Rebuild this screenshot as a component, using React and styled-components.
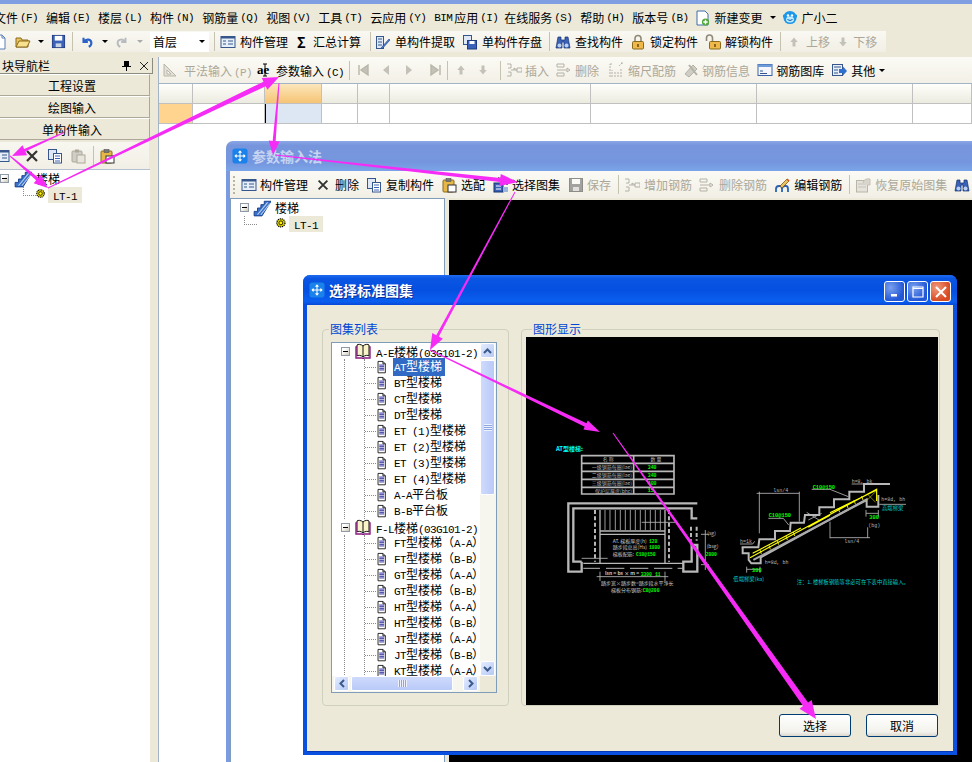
import React from 'react';
import styled, { createGlobalStyle } from 'styled-components';

const GlobalStyle = createGlobalStyle`
  html, body { margin: 0; padding: 0; background: #ece9d8; }
  body { font-family: "Noto Sans CJK SC", "Liberation Sans", sans-serif; font-size: 12px; color: #000; }
`;

const Page = styled.div`
  position: relative;
  width: 972px;
  height: 762px;
  overflow: hidden;
  background: #ece9d8;
  display: flex;
  flex-direction: column;
`;

const L = styled.span`
  font-family: "Liberation Mono", monospace;
  font-size: 11px;
  letter-spacing: -0.6px;
  margin-left: ${p => p.$ml ?? 0}px;
`;

const TopStrip = styled.div`
  height: 4px;
  flex: none;
  background: #7f9fe2;
`;

const MenuBar = styled.div`
  height: 27px;
  flex: none;
  display: flex;
  align-items: center;
  gap: 8px;
  margin-left: -6px;
`;

const MenuItem = styled.span`
  display: flex;
  align-items: center;
  gap: 2px;
  margin-right: ${p => p.$mr ?? 0}px;
  white-space: nowrap;
`;

const Caret = styled.i`
  width: 0;
  height: 0;
  flex: none;
  margin-left: ${p => p.$ml ?? 0}px;
  border-left: 3px solid transparent;
  border-right: 3px solid transparent;
  border-top: 3px solid ${p => (p.$off ? '#aaa' : '#000')};
`;

const MainBar = styled.div`
  width: 886px;
  height: 21px;
  flex: none;
  display: flex;
  align-items: center;
  gap: 7px;
  margin-bottom: 3px;
  background: linear-gradient(#f9f8f2, #f1efe5);
  overflow: hidden;
`;

const Tool = styled.span`
  display: flex;
  align-items: center;
  gap: ${p => p.$gap ?? 4}px;
  flex: none;
  margin-left: ${p => p.$ml ?? 0}px;
  white-space: nowrap;
  color: ${p => (p.$off ? '#aca899' : '#000')};
`;

const Sigma = styled.b`
  width: 9px;
  font-size: 14px;
  line-height: 14px;
`;

const Sep = styled.i`
  width: 1px;
  height: 19px;
  flex: none;
  margin-left: ${p => p.$ml ?? 0}px;
  background: #c5c2b0;
`;

const Combo = styled.div`
  width: 59px;
  height: 20px;
  flex: none;
  display: flex;
  align-items: center;
  justify-content: space-between;
  padding: 0 4px 0 3px;
  box-sizing: border-box;
  background: #fff;
`;

const Work = styled.div`
  flex: 1;
  display: flex;
  min-height: 0;
`;

const Side = styled.aside`
  width: 158px;
  flex: none;
  display: flex;
  flex-direction: column;
`;

const SideHead = styled.div`
  width: 153px;
  height: 16px;
  margin-top: 3px;
  padding-left: 2px;
  box-sizing: border-box;
  display: flex;
  align-items: center;
  justify-content: space-between;
  border-bottom: 1px solid #8b8b80;
  border-right: 1px solid #8b8b80;
`;

const HeadIcons = styled.span`
  display: flex;
  align-items: center;
  gap: 9px;
  padding-right: 4px;
`;

const NavBtn = styled.div`
  width: 156px;
  height: 22px;
  margin-left: -6px;
  box-sizing: border-box;
  display: flex;
  align-items: center;
  justify-content: center;
  background: #ece9d8;
  border: 1px solid #fff;
  border-right-color: #aca899;
  border-bottom-color: #aca899;
`;

const SideTools = styled.div`
  width: 149px;
  height: 27px;
  margin-top: 2px;
  display: flex;
  align-items: center;
  gap: 7px;
  background: linear-gradient(#f8f7f0, #f1efe5);
`;

const SideTree = styled.div`
  width: 150px;
  flex: 1;
  background: #fff;
  box-sizing: border-box;
  border-top: 1px solid #b4c0d0;
`;

const Content = styled.section`
  flex: 1;
  display: flex;
  flex-direction: column;
  border-left: 1px solid #a3b3c8;
  background: #fff;
  margin-top: 2px;
  min-width: 0;
`;

const ContentBar = styled.div`
  height: 26px;
  flex: none;
  display: flex;
  align-items: center;
  gap: 7px;
  padding-left: 3px;
  background: linear-gradient(#fbfaf5, #f2f0e6);
  border-bottom: 1px solid #a3b3c8;
  overflow: hidden;
`;

const Grid = styled.div`
  display: grid;
  grid-template-columns: 34px 72px 57px 36px 32px 201px 166px 156px 1fr;
  grid-template-rows: 20px 20px;
  flex: none;
`;

const Cell = styled.div`
  box-sizing: border-box;
  border-right: 1px solid #c0c0c0;
  border-bottom: 1px solid #c0c0c0;
  background: ${p => (p.$head ? 'linear-gradient(#fffffb, #ecebe0)' : '#fff')};
`;

const HeadHot = styled(Cell)`
  background: linear-gradient(#fbe6bb, #f6c474);
`;

const RowHot = styled(Cell)`
  background: #ffd48e;
`;

const SelCell = styled(Cell)`
  background: #dde6f3;
  box-shadow: inset 1px 0 0 #000;
`;

const TitleBar = styled.div`
  height: 30px;
  flex: none;
  display: flex;
  align-items: center;
  gap: 4px;
  padding: 0 6px;
  box-sizing: border-box;
  border-radius: 7px 7px 0 0;
  background: ${p => (p.$active
    ? 'linear-gradient(#1f6cf0 0, #0a55e2 12%, #0550e0 50%, #0a5ff0 88%, #0848d8 100%)'
    : 'linear-gradient(#8aa6e6 0, #7795dc 15%, #7596de 70%, #7ba4e8 100%)')};
`;

const TitleText = styled.span`
  flex: 1;
  font-size: 14px;
  font-weight: 700;
  white-space: nowrap;
  color: ${p => (p.$active ? '#fff' : '#c6d4f2')};
  text-shadow: ${p => (p.$active ? '1px 1px 0 #0a2f9c' : 'none')};
`;

const Param = styled.div`
  position: absolute;
  left: 226px;
  top: 141px;
  width: 780px;
  height: 660px;
  display: flex;
  flex-direction: column;
  background: #ece9d8;
  border-radius: 7px 7px 0 0;
`;

const ParamBody = styled.div`
  flex: 1;
  display: flex;
  flex-direction: column;
  border-left: 4px solid #7b9be0;
  min-height: 0;
`;

const ParamBar = styled.div`
  height: 27px;
  flex: none;
  display: flex;
  align-items: center;
  gap: 8px;
  padding-left: 3px;
  background: linear-gradient(#fbfaf5, #f1efe5);
  overflow: hidden;
`;

const Grip = styled.i`
  width: 2px;
  height: 18px;
  margin-right: -2px;
  flex: none;
  background: repeating-linear-gradient(#b8b5a5 0 2px, transparent 2px 4px);
`;

const ParamPanes = styled.div`
  flex: 1;
  display: flex;
  gap: 4px;
  min-height: 0;
`;

const ParamTree = styled.div`
  width: 215px;
  flex: none;
  box-sizing: border-box;
  background: #fff;
  border: 1px solid #7f9db9;
  border-bottom: 0;
`;

const BlackPane = styled.div`
  flex: 1;
  margin-top: 2px;
  background: #000;
`;

const TreeRow = styled.div`
  height: ${p => p.$h ?? 16}px;
  display: flex;
  align-items: center;
  padding-left: ${p => p.$indent ?? 0}px;
  white-space: nowrap;
`;

const PlusBox = styled.i`
  width: 9px;
  height: 9px;
  box-sizing: border-box;
  flex: none;
  margin-left: ${p => p.$ml ?? 0}px;
  margin-right: ${p => p.$mr ?? 5}px;
  border: 1px solid #8f9aa8;
  background: linear-gradient(135deg, #fff 30%, #cfc9b4);
  display: flex;
  align-items: center;
  justify-content: center;
  &::after { content: ''; width: 5px; height: 1px; background: #000; }
`;

const Dash = styled.i`
  width: ${p => p.$w}px;
  flex: none;
  border-top: 1px dotted #8c8c8c;
`;

const Elbow = styled.i`
  width: 12px;
  height: 8px;
  flex: none;
  align-self: flex-start;
  margin-right: ${p => p.$mr ?? 0}px;
  border-left: 1px dotted #8c8c8c;
  border-bottom: 1px dotted #8c8c8c;
`;

const Name = styled.span`
  margin-left: ${p => p.$ml ?? 4}px;
`;

const LeafName = styled.span`
  height: 16px;
  line-height: 16px;
  padding: 0 5px;
  background: #ece9d8;
`;

const Dialog = styled.div`
  position: absolute;
  left: 303px;
  top: 275px;
  width: 654px;
  height: 480px;
  display: flex;
  flex-direction: column;
  background: #0a50e0;
  border-radius: 7px 7px 0 0;
`;

const DialogBody = styled.div`
  flex: 1;
  margin: 0 4px 3px;
  display: flex;
  flex-direction: column;
  background: #ece9d8;
  border-bottom: 1px solid #0438b8;
  min-height: 0;
`;

const Groups = styled.div`
  display: flex;
  gap: 12px;
  padding: 18px 0 0 15px;
`;

const Group = styled.fieldset`
  margin: 0;
  box-sizing: border-box;
  width: ${p => p.$w}px;
  height: 383px;
  padding: ${p => p.$pad};
  border: 1px solid #d0d0bf;
  border-radius: 4px;
  flex: none;
`;

const Legend = styled.legend`
  padding: 0 1px;
  margin-left: ${p => p.$ml}px;
  line-height: 12px;
  color: #0046d5;
`;

const Listbox = styled.div`
  width: 166px;
  height: 351px;
  box-sizing: border-box;
  border: 1px solid #7f9db9;
  background: #fff;
  display: grid;
  grid-template-columns: 1fr 16px;
  grid-template-rows: 1fr 16px;
  overflow: hidden;
`;

const ListClip = styled.div`
  overflow: hidden;
  padding: 0 0 0 5px;
`;

const Branch = styled.div`
  margin-left: 7px;
  border-left: 1px dotted #8c8c8c;
  padding-left: 12px;
`;

const SubBranch = styled.div`
  margin-left: 7px;
  border-left: 1px dotted #8c8c8c;
`;

const ItemName = styled.span`
  margin-left: 4px;
  padding: 0 ${p => (p.$sel ? 3 : 1)}px 0 1px;
  line-height: 15px;
  color: ${p => (p.$sel ? '#fff' : '#000')};
  background: ${p => (p.$sel ? '#316ac5' : 'transparent')};
`;

const ScrollV = styled.div`
  display: flex;
  flex-direction: column;
  background: #f6f5ee;
`;

const ScrollH = styled.div`
  display: flex;
  gap: 2px;
  padding: 0 2px;
  background: #f6f5ee;
`;

const Spacer = styled.span`
  flex: 1;
`;

const Corner = styled.div`
  background: #ece9d8;
`;

const ScrollBtn = styled.div`
  width: 15px;
  height: 15px;
  box-sizing: border-box;
  flex: none;
  display: flex;
  align-items: center;
  justify-content: center;
  border: 1px solid #fff;
  border-radius: 2px;
  background: linear-gradient(135deg, #e4ecff, #b5c8f5);
`;

const Thumb = styled.div`
  flex: none;
  box-sizing: border-box;
  width: ${p => p.$w}px;
  height: ${p => p.$h}px;
  margin-top: ${p => (p.$v ? 2 : 0)}px;
  display: flex;
  align-items: center;
  justify-content: center;
  border: 1px solid #fff;
  border-radius: 2px;
  background: ${p => (p.$v ? 'linear-gradient(90deg, #cfdafc, #b9caf8)' : 'linear-gradient(#cfdafc, #b9caf8)')};
`;

const Gripper = styled.i`
  width: ${p => (p.$v ? 8 : 9)}px;
  height: 7px;
  background: ${p => (p.$v
    ? 'repeating-linear-gradient(#eef2ff 0 1px, #8ea6df 1px 2px)'
    : 'repeating-linear-gradient(90deg, #eef2ff 0 1px, #8ea6df 1px 2px)')};
`;

const Buttons = styled.div`
  display: flex;
  justify-content: flex-end;
  gap: 15px;
  padding: 8px 15px 0 0;
`;

const PushBtn = styled.button`
  width: 72px;
  height: 23px;
  padding: 0;
  font: inherit;
  color: #000;
  border: 1px solid #003c74;
  border-radius: 3px;
  background: linear-gradient(#fff, #f3f2ec 80%, #dcd8ce);
`;

const WinBtn = styled.span`
  width: 21px;
  height: 21px;
  flex: none;
  box-sizing: border-box;
  margin: 3px 0 0 -2px;
  display: flex;
  align-items: center;
  justify-content: center;
  border: 1px solid #fff;
  border-radius: 3px;
  background: ${p => (p.$close
    ? 'radial-gradient(circle at 30% 30%, #f09a7c, #d84a22 70%)'
    : 'radial-gradient(circle at 30% 30%, #7aa0ee, #2257d6 70%)')};
`;

const Arrows = styled.svg`
  position: absolute;
  left: 0;
  top: 0;
  pointer-events: none;
`;

const CadBox = styled.svg`
  display: block;
`;

const LogoSvg = styled.svg`
  flex: none;
`;

const IconSvg = styled.svg`
  flex: none;
  display: block;
  margin-left: ${p => p.$ml ?? 0}px;
  opacity: ${p => (p.$off ? 0.55 : 1)};
  filter: ${p => (p.$off ? 'grayscale(1)' : 'none')};
`;

const ICONS = {
  doc: <><path d="M3 1h7l3 3v11H3z" fill="#fff" stroke="#5a7fb5" /><path d="M10 1v3h3" fill="none" stroke="#5a7fb5" /></>,
  folder: <><path d="M1 13V4h5l1 2h6v7z" fill="#e8c25a" stroke="#8a6a1c" /><path d="M1 13l3-6h11l-3 6z" fill="#f8e08e" stroke="#8a6a1c" /></>,
  save: <><rect x="1.5" y="1.5" width="13" height="13" fill="#3a62b8" stroke="#1e3a80" /><rect x="4" y="2" width="8" height="5" fill="#fff" /><rect x="5" y="10" width="6" height="4" fill="#c8d2e6" /></>,
  undo: <path d="M4 3v5h5M4.5 8C7 3.5 13 5 13 9c0 2-1 3.5-3 4.5" fill="none" stroke="#2a62c8" strokeWidth="2.4" />,
  redo: <path d="M12 3v5H7M11.5 8C9 3.5 3 5 3 9c0 2 1 3.5 3 4.5" fill="none" stroke="#b8bcc0" strokeWidth="2.2" />,
  manage: <><rect x="1" y="2.5" width="14" height="11" fill="#e6eef8" stroke="#37568c" /><rect x="1" y="2.5" width="14" height="2" fill="#37568c" /><path d="M3 7h3M3 10h3M8 7h5M8 10h5" stroke="#37568c" /></>,
  extract: <><rect x="1.5" y="2.5" width="7" height="12" fill="#dfe8f6" stroke="#37568c" /><path d="M3 5h4M3 8h4M3 11h4" stroke="#37568c" /><path d="M6 14L14 5l1 1-8 9z" fill="#4a80d8" stroke="#1e3a80" strokeWidth=".6" /></>,
  saveRow: <><rect x="1.5" y="1.5" width="8" height="9" fill="#dfe8f6" stroke="#37568c" /><rect x="5.5" y="6.5" width="9" height="8.5" fill="#3a62b8" stroke="#1e3a80" /><rect x="7.5" y="7" width="5" height="3" fill="#fff" /></>,
  binoc: <><path d="M3 3h3v3h4V3h3l2 11H9V8H7v6H1z" fill="#3a62b8" stroke="#16306e" strokeWidth=".7" /><circle cx="4.5" cy="11.5" r="2" fill="#b8d0f4" /><circle cx="11.5" cy="11.5" r="2" fill="#b8d0f4" /></>,
  lock: <><path d="M5 8V4.5a3 3 0 0 1 6 0V8" fill="none" stroke="#8f8a78" strokeWidth="1.6" /><rect x="2.5" y="7.5" width="11" height="7.5" rx="1" fill="#eeb84a" stroke="#8a6a1c" /><path d="M8 10v3" stroke="#6a4a10" strokeWidth="1.5" /></>,
  unlock: <><path d="M1.5 7V4a3 3 0 0 1 6 0v3.5" fill="none" stroke="#8f8a78" strokeWidth="1.6" /><rect x="4.5" y="7.5" width="11" height="7.5" rx="1" fill="#eeb84a" stroke="#8a6a1c" /><path d="M10 10v3" stroke="#6a4a10" strokeWidth="1.5" /></>,
  up: <path d="M8 2l5 6h-3v6H6V8H3z" fill="#c4c2b8" />,
  down: <path d="M8 14l5-6h-3V2H6v6H3z" fill="#c4c2b8" />,
  newDoc: <><path d="M3 1h8l3 3v11H3z" fill="#fff" stroke="#3f6db0" /><circle cx="11.5" cy="12" r="3.6" fill="#4ea838" /><path d="M11.5 9.8v4.4M9.3 12h4.4" stroke="#fff" strokeWidth="1.4" /></>,
  face: <><circle cx="8" cy="7.5" r="6.6" fill="#1c98ea" /><path d="M1 6h2M13 6h2" stroke="#1c98ea" strokeWidth="2.5" /><ellipse cx="8" cy="9.5" rx="4" ry="3" fill="#bfeaff" /><circle cx="6" cy="5.5" r="1.2" fill="#fff" /><circle cx="10" cy="5.5" r="1.2" fill="#fff" /><path d="M5.5 9.5q2.5 2 5 0" stroke="#0a5ca8" fill="none" /></>,
  ruler: <><path d="M2 14V2l12 12z" fill="#e2e0d8" stroke="#b8b6a8" /><path d="M5 12V8l4 4z" fill="#fff" stroke="#b8b6a8" /></>,
  first: <path d="M4 3v10M13 3L6 8l7 5z" fill="#c4c2b8" stroke="#b8b6a8" strokeWidth="1.4" />,
  prev: <path d="M11 3L5 8l6 5z" fill="#c4c2b8" />,
  next: <path d="M5 3l6 5-6 5z" fill="#c4c2b8" />,
  last: <path d="M12 3v10M3 3l7 5-7 5z" fill="#c4c2b8" stroke="#b8b6a8" strokeWidth="1.4" />,
  insert: <path d="M1 2h4v4H2M2 10h3v4H1M5 8h3M8 6l3 2-3 0zM11 6h5v4h-5z" fill="none" stroke="#b4b2a6" />,
  remove: <path d="M1 2h7v3H1zM1 11h7v3H1zM1 8h10M11 6l3 2-3 2z" fill="none" stroke="#b4b2a6" />,
  scale: <path d="M2 15V2M2 2h3M13 1h3M4 15V8M7 15v-6M10 15V10M13 15V7M14 1l-3 3" fill="none" stroke="#b4b2a6" strokeDasharray="2 1" />,
  rebarInfo: <><path d="M2 12l8-9 4 4-8 8z" fill="#cfcdc4" stroke="#b4b2a6" /><path d="M6 3l8 10" stroke="#b4b2a6" strokeWidth="2" /></>,
  library: <><rect x="1" y="2.5" width="14" height="11" fill="#f4f8fd" stroke="#3a62a8" /><rect x="1" y="2.5" width="14" height="2.5" fill="#6f9bd8" /><path d="M3 9h3M3 11.5h7" stroke="#37568c" /></>,
  other: <><rect x="1.5" y="2.5" width="10" height="11" fill="#e6eef8" stroke="#37568c" /><path d="M3 5h7M3 8h4M3 11h4" stroke="#37568c" /><path d="M8 7h4V4.5L16 9l-4 4.5V11H8z" fill="#2f6fd0" /></>,
  cross: <path d="M3 3l10 10M13 3L3 13" stroke="#333" strokeWidth="2.2" />,
  copy: <><rect x="1.5" y="1.5" width="8" height="10" fill="#dfe8f6" stroke="#37568c" /><rect x="6.5" y="5.5" width="8" height="9.5" fill="#fff" stroke="#37568c" /><path d="M8 8h5M8 10.5h5M8 13h5" stroke="#3a62b8" /></>,
  paste: <><rect x="2" y="3" width="10" height="11" rx="1" fill="#cfcdc4" stroke="#aca899" /><rect x="7" y="7" width="8" height="8" fill="#e8e6dc" stroke="#aca899" /><rect x="5" y="1.5" width="4" height="3" fill="#aca899" /></>,
  pasteOn: <><rect x="2" y="3" width="11" height="12" rx="1" fill="#e6b848" stroke="#8a6a1c" /><rect x="5" y="1.5" width="5" height="3" fill="#777" stroke="#444" strokeWidth=".5" /><rect x="7" y="8" width="8" height="7" fill="#fff" stroke="#333" /></>,
  atlas: <><rect x="1" y="6" width="9" height="9" fill="#3a62b8" stroke="#16306e" /><path d="M3 9h5M3 12h5" stroke="#fff" /><path d="M5 1h9v7" fill="none" stroke="#666" strokeDasharray="1.5 1" strokeWidth="2" /><rect x="10" y="10" width="5" height="5" fill="#9fb4dc" /></>,
  book: <><path d="M8 3C6 1 3 1 2 2v11c1-1 4-1 6 1 2-2 5-2 6-1V2c-1-1-4-1-6 1z" fill="#f8f4c8" stroke="#111" /><path d="M8 3v11" stroke="#111" /><path d="M2 4H1v11h6l1 .8.9-.8H15V4h-1" fill="none" stroke="#8a1a80" strokeWidth="1.4" /></>,
  page: <><path d="M2.5 .5h6l3 3v11h-9z" fill="#fff" stroke="#000" /><path d="M8.5 .5v3h3" fill="none" stroke="#000" /><path d="M4 5h6M4 7h6M4 9h6M4 11h6" stroke="#00008b" /></>,
  stairs: <><path d="M1 15V11h3V8h3V5h3V2h6L8 15z" fill="#3a72c8" stroke="#123a88" strokeWidth=".8" /><path d="M4 14l9-11M7 14l8-10" stroke="#b8d0f4" /></>,
  gear: <><circle cx="6" cy="6" r="5" fill="#e6d800" stroke="#000" strokeDasharray="1.4 1" strokeWidth="1.6" /><circle cx="6" cy="6" r="2.4" fill="#fff700" stroke="#000" /></>,
  editRebar: <><path d="M2 15v-3q0-3 3-3h1q2 0 2 3v3M8 15v-3q0-3 3-3h1q2 0 2 3v3" fill="none" stroke="#2a62b8" strokeWidth="1.8" /><path d="M6 9l7-7 2 2-7 7z" fill="#e8c25a" stroke="#7a4a10" strokeWidth=".7" /><path d="M12.5 2.5l1-1 2 2-1 1z" fill="#d84a22" /></>,
  restore: <><rect x="1.5" y="3.5" width="11" height="11.5" fill="#e4e2da" stroke="#b8b6a8" /><path d="M3 7h8M3 10h8" stroke="#c4c2b8" /><path d="M8 6q1-5 7-4v6h-3" fill="#d8d6cc" stroke="#c4c2b8" /></>,
};

const Icon = ({ name, size = 16, w, off, ml }) => (
  <IconSvg width={w ?? size} height={size} viewBox="0 0 16 16" $off={off} $ml={ml}>
    {ICONS[name]}
  </IconSvg>
);

const AppLogo = () => (
  <LogoSvg width="16" height="16" viewBox="0 0 17 17">
    <rect x=".5" y=".5" width="16" height="16" rx="3" fill="#1a82ea" />
    <path d="M8.5 3v11M3 8.5h11M8.5 3L7 5M8.5 3L10 5M8.5 14L7 12M8.5 14L10 12M3 8.5L5 7M3 8.5L5 10M14 8.5L12 7M14 8.5L12 10" fill="none" stroke="#fff" strokeWidth="1.1" />
  </LogoSvg>
);

const MENUS = [
  ['文件', '(F)'], ['编辑', '(E)'], ['楼层', '(L)'], ['构件', '(N)'], ['钢筋量', '(Q)'], ['视图', '(V)'],
  ['工具', '(T)'], ['云应用', '(Y)'], ['BIM应用', '(I)', -2], ['在线服务', '(S)'], ['帮助', '(H)'], ['版本号', '(B)'],
];

const ATLAS_A = ['AT型楼梯', 'BT型楼梯', 'CT型楼梯', 'DT型楼梯', 'ET (1)型楼梯', 'ET (2)型楼梯', 'ET (3)型楼梯', 'ET (4)型楼梯', 'A-A平台板', 'B-B平台板'];
const ATLAS_F = ['FT', 'GT', 'HT', 'JT'].flatMap(k => [`${k}型楼梯（A-A）`, `${k}型楼梯（B-B）`]).concat('KT型楼梯（A-A）');

const mono = s => s.split(/([A-Za-z0-9()\- ]+)/).map((t, i) => (i % 2 ? <L key={i}>{t}</L> : t));

const Arrow = ({ from, to, w = 4, head = 16, hw = 13 }) => {
  const dx = to[0] - from[0];
  const dy = to[1] - from[1];
  const len = Math.hypot(dx, dy);
  const ux = dx / len;
  const uy = dy / len;
  const nx = -uy;
  const ny = ux;
  const bx = to[0] - ux * head;
  const by = to[1] - uy * head;
  const pts = [
    [from[0] + nx * 0.5, from[1] + ny * 0.5],
    [bx + nx * w / 2, by + ny * w / 2],
    [bx + nx * hw / 2, by + ny * hw / 2],
    to,
    [bx - nx * hw / 2, by - ny * hw / 2],
    [bx - nx * w / 2, by - ny * w / 2],
    [from[0] - nx * 0.5, from[1] - ny * 0.5],
  ];
  return <polygon points={pts.map(p => p.join(',')).join(' ')} fill="#f62cf6" />;
};

const PlanDrawing = () => (
  <g transform="translate(540 430) scale(.3333)">
    <text x="48" y="64" fill="#0ff" fontSize="18" fontWeight="700">AT型楼梯:</text>
    <path d="M125 77h277v115H125zM125 124h277M125 148h277M125 172h277M125 100h277M281 77v115" fill="none" stroke="#b8b8b8" strokeWidth="5" />
    <g fontSize="15" fill="#b8b8b8" textAnchor="end">
      <text x="205" y="94" textAnchor="middle">名 称</text>
      <text x="348" y="94" textAnchor="middle">数 量</text>
      <text x="276" y="117">一级钢筋每圈(lae)</text>
      <text x="276" y="141">二级钢筋每圈(lae)</text>
      <text x="276" y="165">三级钢筋每圈(lae)</text>
      <text x="276" y="188">保护层厚度(bhc)</text>
    </g>
    <g fontSize="15" fill="#0f0" fontFamily="Liberation Mono, monospace" fontWeight="700">
      <text x="323" y="118">340</text>
      <text x="323" y="141">340</text>
      <text x="323" y="165">400</text>
      <text x="323" y="186">15</text>
    </g>
    <g fill="none" stroke="#b8b8b8">
      <path d="M125 395h-25V235h355v30h17M472 220H85v205h40v-30M430 395h25v-50h17v80h-42z" strokeWidth="7" />
      <path d="M165 240v155M387 240v155M453 290v42M470 290v42" strokeWidth="6" strokeDasharray="12 7" />
      <path d="M195 240v60M210 240v60M226 240v60M241 240v60M256 240v60M271 240v60M286 240v60M301 240v60M316 240v60M331 240v60M346 240v60M361 240v60" strokeWidth="2.5" />
      <path d="M180 240v158M375 240v158M180 303h195M180 313h195M130 400h300" strokeWidth="4" />
      <path d="M130 415h50M198 415h55M270 415h55M342 415h55M413 415h15" strokeWidth="3" />
      <path d="M305 277h100M125 385h78M170 440h215M180 425v28M375 425v28M496 300v120M483 313h24M483 404h24" strokeWidth="2.5" />
    </g>
    <g fontSize="15" fill="#c8c8c8">
      <text x="218" y="339">AT. 梯板厚度(h)</text>
      <text x="218" y="358">踏步段总高(Hs)</text>
      <text x="218" y="377">梯板配筋:</text>
      <text x="183" y="465">踏步宽×踏步数=踏步段水平净长</text>
      <text x="213" y="486">梯板分布钢筋:</text>
      <text x="195" y="435" fontWeight="700">lsn = bs × m =</text>
      <text x="502" y="315">(sg)</text>
      <text x="500" y="354">(bsg)</text>
    </g>
    <g fontSize="14" fill="#0f0" fontFamily="Liberation Mono, monospace" fontWeight="700">
      <text x="327" y="339">120</text>
      <text x="327" y="358">1800</text>
      <text x="288" y="377">C10@150</text>
      <text x="497" y="378">2000</text>
      <text x="302" y="437">3300</text>
      <text x="345" y="437">11</text>
      <text x="308" y="486">C8@200</text>
    </g>
  </g>
);

const SectionDrawing = () => (
  <g transform="translate(720 470) scale(.3333)">
    <g fill="none" stroke="#b8b8b8" strokeLinejoin="miter">
      <path d="M65 232h50l3-24h47v-25h45l2-25h40l3-23h43v-23h44V88h46V65h44V42h78" strokeWidth="6" />
      <path d="M68 232v18h18v20l8 10h28v-18L440 88v22h35V75" strokeWidth="6" />
      <path d="M110 70h128M118 65v125M238 65v90M260 127l40 25M265 150l40-20M330 203h120M330 155v50M443 172v32" strokeWidth="2.5" />
      <path d="M145 145h45l16 20M275 58h55l55 22M395 42h40M80 290v18M120 290v18M80 298h40M438 120v20M475 120v20M438 130h37M478 103h80M60 222h38l6-8" strokeWidth="2.5" />
    </g>
    <path d="M100 270L440 90" stroke="#aaa" strokeWidth="6" />
    <g fill="none" stroke="#ff0">
      <path d="M90 263L470 58v35M98 250l145-76M330 128L470 60M265 172l65-36" strokeWidth="3.5" />
      <path d="M120 240l4 12M147 226l4 12M172 212l4 12M198 198l4 12M220 186l4 12M355 115l4 12M380 102l4 12M402 90l4 12M425 78l4 12" strokeWidth="2.5" />
      <path d="M440 92l30-30M445 75l22 22" strokeWidth="1.5" />
    </g>
    <g fontSize="16" fill="#0f0" fontFamily="Liberation Mono, monospace" fontWeight="700">
      <text x="278" y="56">C10@150</text>
      <text x="146" y="140">C10@150</text>
      <text x="96" y="307">300</text>
      <text x="448" y="147">300</text>
    </g>
    <g fontSize="15" fill="#b8b8b8" fontFamily="Liberation Mono, monospace">
      <text x="160" y="66">lsn/4</text>
      <text x="373" y="218">lsn/4</text>
      <text x="395" y="38">h=8, bk</text>
      <text x="60" y="218">h=1k</text>
      <text x="134" y="282">h=8d, bh</text>
      <text x="484" y="93">h=8d, bh</text>
      <text x="445" y="170">(bg)</text>
    </g>
    <g fontSize="16" fill="#0cc">
      <text x="40" y="332">低端梯梁(ka)</text>
      <text x="486" y="120">高端梯梁</text>
      <text x="230" y="342">注：1. 楼梯板钢筋等非必可在下表中直接输入。</text>
    </g>
  </g>
);

export default function App() {
  return (
    <Page>
      <GlobalStyle />
      <TopStrip />
      <MenuBar>
        {MENUS.map(([name, key, mr]) => (
          <MenuItem key={name} $mr={mr}>{mono(name)}<L>{key}</L></MenuItem>
        ))}
        <Tool $gap={4}><Icon name="newDoc" ml={-2} />新建变更</Tool>
        <Caret />
        <Tool $ml={-2} $gap={3}><Icon name="face" />广小二</Tool>
      </MenuBar>

      <MainBar>
        <Icon name="doc" ml={-8} />
        <Icon name="folder" />
        <Caret />
        <Icon name="save" size={15} />
        <Sep $ml={-1} />
        <Icon name="undo" size={14} />
        <Caret $ml={1} />
        <Icon name="redo" size={14} />
        <Caret $off $ml={1} />
        <Combo>首层<Caret /></Combo>
        <Sep $ml={-2} />
        <Tool $ml={-2}><Icon name="manage" />构件管理</Tool>
        <Tool $ml={2} $gap={7}><Sigma>Σ</Sigma>汇总计算</Tool>
        <Sep $ml={2} />
        <Tool $ml={-3}><Icon name="extract" />单构件提取</Tool>
        <Tool><Icon name="saveRow" />单构件存盘</Tool>
        <Sep />
        <Tool $ml={-2}><Icon name="binoc" />查找构件</Tool>
        <Tool><Icon name="lock" />锁定构件</Tool>
        <Tool><Icon name="unlock" />解锁构件</Tool>
        <Sep />
        <Tool $off $gap={6}><Icon name="up" size={12} />上移</Tool>
        <Tool $off><Icon name="down" size={12} />下移</Tool>
      </MainBar>

      <Work>
        <Side>
          <SideHead>
            块导航栏
            <HeadIcons>
              <svg width="9" height="10" viewBox="0 0 9 10"><path d="M2 0h5v5h2v1H5v4H4V6H0V5h2z" fill="#000" /></svg>
              <svg width="8" height="8" viewBox="0 0 8 8"><path d="M0 0l8 8M8 0L0 8" stroke="#222" /></svg>
            </HeadIcons>
          </SideHead>
          <NavBtn>工程设置</NavBtn>
          <NavBtn>绘图输入</NavBtn>
          <NavBtn>单构件输入</NavBtn>
          <SideTools>
            <Icon name="manage" ml={-6} />
            <Icon name="cross" ml={7} />
            <Icon name="copy" />
            <Icon name="paste" />
            <Sep />
            <Icon name="pasteOn" ml={-2} />
          </SideTools>
          <SideTree>
            <TreeRow $h={17}>
              <PlusBox />
              <Icon name="stairs" size={18} />
              <Name>楼梯</Name>
            </TreeRow>
            <TreeRow $indent={23}>
              <Elbow />
              <Icon name="gear" size={12} />
              <LeafName><L>LT-1</L></LeafName>
            </TreeRow>
          </SideTree>
        </Side>
        <Content>
          <ContentBar>
            <Tool $off $gap={6}><Icon name="ruler" /><span>平法输入<L $ml={2}>(P)</L></span></Tool>
            <Tool $ml={-2} $gap={3}>
              <svg width="16" height="16" viewBox="0 0 16 16">
                <text x="0" y="12" fontSize="13" fontWeight="700" fontFamily="Liberation Serif, serif">ae</text>
                <path d="M6 2h4M8 2v12M6 14h4" stroke="#000" fill="none" />
              </svg>
              <span>参数输入<L $ml={2}>(C)</L></span>
            </Tool>
            <Sep $ml={-2} />
            <Icon name="first" ml={-2} /><Icon name="prev" /><Icon name="next" /><Icon name="last" ml={4} />
            <Sep $ml={-4} />
            <Icon name="up" size={12} /><Icon name="down" size={12} ml={3} />
            <Sep $ml={4} />
            <Tool $off $ml={-2} $gap={3}><Icon name="insert" />插入</Tool>
            <Tool $off $gap={3}><Icon name="remove" />删除</Tool>
            <Tool $off $ml={2}><Icon name="scale" />缩尺配筋</Tool>
            <Tool $off $gap={3}><Icon name="rebarInfo" />钢筋信息</Tool>
            <Tool $gap={3}><Icon name="library" />钢筋图库</Tool>
            <Tool><Icon name="other" />其他<Caret /></Tool>
          </ContentBar>
          <Grid>
            <Cell $head /><Cell $head /><HeadHot /><Cell $head /><Cell $head /><Cell $head /><Cell $head /><Cell $head /><Cell $head />
            <RowHot /><Cell /><SelCell /><Cell /><Cell /><Cell /><Cell /><Cell /><Cell />
          </Grid>
        </Content>
      </Work>

      <Param>
        <TitleBar>
          <AppLogo />
          <TitleText>参数输入法</TitleText>
        </TitleBar>
        <ParamBody>
          <ParamBar>
            <Grip />
            <Tool $gap={3}><Icon name="manage" />构件管理</Tool>
            <Tool $gap={5}><Icon name="cross" size={14} />删除</Tool>
            <Tool $ml={-1}><Icon name="copy" />复制构件</Tool>
            <Tool $ml={-1}><Icon name="pasteOn" />选配</Tool>
            <Tool $gap={3}><Icon name="atlas" />选择图集</Tool>
            <Tool $off $gap={3}><Icon name="save" off />保存</Tool>
            <Sep $ml={-1} />
            <Tool $off $ml={-3}><Icon name="insert" />增加钢筋</Tool>
            <Tool $off $ml={-1}><Icon name="remove" />删除钢筋</Tool>
            <Tool $ml={-1}><Icon name="editRebar" />编辑钢筋</Tool>
            <Sep $ml={-1} />
            <Tool $off $ml={-3}><Icon name="restore" />恢复原始图集</Tool>
            <Icon name="binoc" ml={-1} />
          </ParamBar>
          <ParamPanes>
            <ParamTree>
              <TreeRow $indent={9} $h={17}>
                <PlusBox $mr={4} />
                <Icon name="stairs" size={18} />
                <Name>楼梯</Name>
              </TreeRow>
              <TreeRow $indent={13}>
                <Elbow $mr={19} />
                <Icon name="gear" size={13} />
                <LeafName><L>LT-1</L></LeafName>
              </TreeRow>
            </ParamTree>
            <BlackPane />
          </ParamPanes>
        </ParamBody>
      </Param>

      <Dialog>
        <TitleBar $active>
          <AppLogo />
          <TitleText $active>选择标准图集</TitleText>
          <WinBtn><svg width="10" height="10" viewBox="0 0 10 10"><rect x="1" y="7" width="6" height="2.5" fill="#fff" /></svg></WinBtn>
          <WinBtn><svg width="12" height="12" viewBox="0 0 12 12"><path d="M1 1h10v10H1zM1 2.5h10" fill="none" stroke="#fff" strokeWidth="1.2" /></svg></WinBtn>
          <WinBtn $close><svg width="12" height="12" viewBox="0 0 12 12"><path d="M1 1l10 10M11 1L1 11" stroke="#fff" strokeWidth="2" /></svg></WinBtn>
        </TitleBar>
        <DialogBody>
          <Groups>
            <Group $w={187} $pad="7px 0 0 8px">
              <Legend $ml={-2}>图集列表</Legend>
              <Listbox>
                <ListClip>
                  <TreeRow>
                    <PlusBox $ml={4} />
                    <Icon name="book" />
                    <Name $ml={5}><L>A-E</L>楼梯<L>(03G101-2)</L></Name>
                  </TreeRow>
                  <Branch>
                    <SubBranch>
                      {ATLAS_A.map((t, i) => (
                        <TreeRow key={t}>
                          <Dash $w={11} />
                          <Icon name="page" size={15} w={13} />
                          <ItemName $sel={i === 0}>{mono(t)}</ItemName>
                        </TreeRow>
                      ))}
                    </SubBranch>
                  </Branch>
                  <TreeRow>
                    <PlusBox $ml={4} />
                    <Icon name="book" />
                    <Name $ml={5}><L>F-L</L>楼梯<L>(03G101-2)</L></Name>
                  </TreeRow>
                  <Branch>
                    <SubBranch>
                      {ATLAS_F.map(t => (
                        <TreeRow key={t}>
                          <Dash $w={11} />
                          <Icon name="page" size={15} w={13} />
                          <ItemName>{mono(t)}</ItemName>
                        </TreeRow>
                      ))}
                    </SubBranch>
                  </Branch>
                </ListClip>
                <ScrollV>
                  <ScrollBtn><svg width="9" height="6" viewBox="0 0 9 6"><path d="M1 5l3.5-3.5L8 5" fill="none" stroke="#3a5a8c" strokeWidth="2" /></svg></ScrollBtn>
                  <Thumb $v $w={15} $h={135}><Gripper $v /></Thumb>
                  <Spacer />
                  <ScrollBtn><svg width="9" height="6" viewBox="0 0 9 6"><path d="M1 1l3.5 3.5L8 1" fill="none" stroke="#3a5a8c" strokeWidth="2" /></svg></ScrollBtn>
                </ScrollV>
                <ScrollH>
                  <ScrollBtn><svg width="6" height="9" viewBox="0 0 6 9"><path d="M5 1L1.5 4.5 5 8" fill="none" stroke="#3a5a8c" strokeWidth="2" /></svg></ScrollBtn>
                  <Thumb $w={102} $h={15}><Gripper /></Thumb>
                  <Spacer />
                  <ScrollBtn><svg width="6" height="9" viewBox="0 0 6 9"><path d="M1 1l3.5 3.5L1 8" fill="none" stroke="#3a5a8c" strokeWidth="2" /></svg></ScrollBtn>
                </ScrollH>
                <Corner />
              </Listbox>
            </Group>
            <Group $w={419} $pad="2px 0 0 4px">
              <Legend $ml={6}>图形显示</Legend>
              <CadBox width="412" height="368" viewBox="526 337 412 368">
                <rect x="526" y="337" width="412" height="368" fill="#000" />
                <PlanDrawing />
                <SectionDrawing />
              </CadBox>
            </Group>
          </Groups>
          <Buttons>
            <PushBtn>选择</PushBtn>
            <PushBtn>取消</PushBtn>
          </Buttons>
        </DialogBody>
      </Dialog>

      <Arrows width="972" height="762" viewBox="0 0 972 762">
        <Arrow from={[63, 133]} to={[12, 156]} w={3} head={14} hw={11} />
        <Arrow from={[10, 156]} to={[48, 188]} w={3.5} head={14} hw={11} />
        <Arrow from={[48, 188]} to={[279, 77]} w={5} head={16} hw={13} />
        <Arrow from={[279, 83]} to={[273, 155]} w={3} head={14} hw={11} />
        <Arrow from={[275, 155]} to={[518, 182]} w={4} head={18} hw={12} />
        <Arrow from={[515, 192]} to={[430, 350]} w={3} head={16} hw={12} />
        <Arrow from={[430, 350]} to={[600, 432]} w={4} head={16} hw={10} />
        <Arrow from={[613, 433]} to={[816, 719]} w={6} head={18} hw={15} />
      </Arrows>
    </Page>
  );
}
